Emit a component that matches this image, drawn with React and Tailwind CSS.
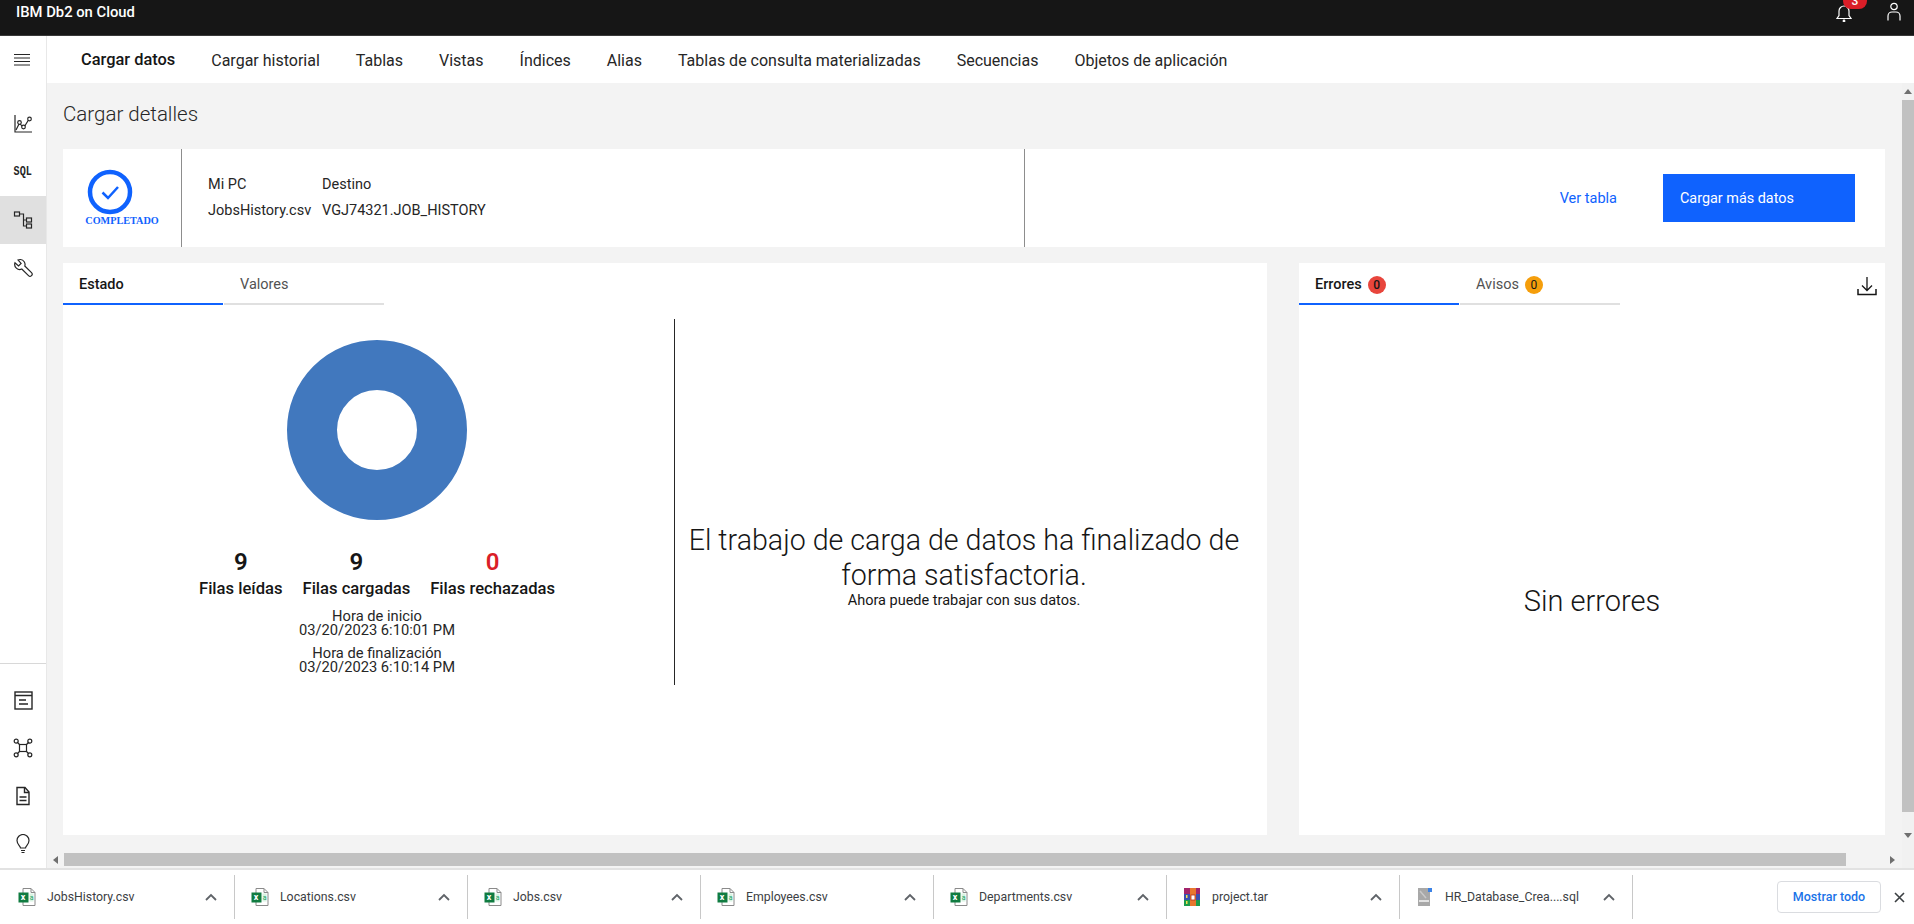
const navItems = ['Cargar datos', 'Cargar historial', 'Tablas', 'Vistas', 'Índices', 'Alias', 'Tablas de consulta materializadas', 'Secuencias', 'Objetos de aplicación'];

const downloads = [
  { name: 'JobsHistory.csv', type: 'xls' },
  { name: 'Locations.csv', type: 'xls' },
  { name: 'Jobs.csv', type: 'xls' },
  { name: 'Employees.csv', type: 'xls' },
  { name: 'Departments.csv', type: 'xls' },
  { name: 'project.tar', type: 'rar' },
  { name: 'HR_Database_Crea....sql', type: 'sql' },
];

const stats = [
  { value: '9', label: 'Filas leídas', red: false },
  { value: '9', label: 'Filas cargadas', red: false },
  { value: '0', label: 'Filas rechazadas', red: true },
];

function Icon({ children, size = 20, vb = 20 }) {
  return (
    <svg width={size} height={size} viewBox={`0 0 ${vb} ${vb}`} fill="none" stroke="#262626" strokeWidth="1.2">
      {children}
    </svg>
  );
}

function ExcelIcon() {
  return (
    <svg width="18" height="18" viewBox="0 0 18 18" fill="none">
      <path d="M5 .5h8l4 4v13H5z" fill="#fff" stroke="#8a8a8a" />
      <path d="M13 .5v4h4" stroke="#8a8a8a" />
      <rect x="11.5" y="5.5" width="4" height="8" fill="#d8f3e2" />
      <text x="11.8" y="12" fontSize="7" fill="#21a366" fontFamily="Roboto, sans-serif">a</text>
      <rect x="0.5" y="4.5" width="10" height="10" fill="#107c41" />
      <text x="2.8" y="12.4" fontSize="9" fontWeight="700" fill="#fff" fontFamily="Roboto, sans-serif">x</text>
    </svg>
  );
}

function RarIcon() {
  return (
    <svg width="18" height="18" viewBox="0 0 18 18">
      <rect x="1" y="0" width="16" height="6" fill="#a3246b" />
      <rect x="1" y="6" width="16" height="6" fill="#3a4fb0" />
      <rect x="1" y="12" width="16" height="6" fill="#1c9c4b" />
      <rect x="7" y="0" width="6" height="18" fill="#e8772e" />
      <rect x="8" y="7" width="4" height="5" fill="#fff" stroke="#b03020" strokeWidth="0.8" />
      <rect x="3" y="7" width="1.5" height="3" fill="#f5e050" />
      <rect x="3" y="13" width="1.5" height="3" fill="#f5e050" />
    </svg>
  );
}

function SqlIcon() {
  return (
    <svg width="18" height="18" viewBox="0 0 18 18">
      <path d="M2 0h10l2 2v16H2z" fill="#a8a8a8" />
      <path d="M4 3l6 7" stroke="#c9c9c9" strokeWidth="1.5" />
      <rect x="3" y="12" width="10" height="2" fill="#e2e2e2" />
      <rect x="12" y="0" width="4" height="4" fill="#3b82e6" />
    </svg>
  );
}

function Triangle({ dir }) {
  const pts = { up: '4,1 8,6 0,6', down: '0,1 8,1 4,6', left: '6,0 6,8 1,4', right: '2,0 2,8 7,4' };
  return (
    <svg width="8" height="8" viewBox="0 0 8 8">
      <polygon points={pts[dir]} fill="#6f6f6f" />
    </svg>
  );
}

function Sidebar() {
  return (
    <aside className="w-[47px] shrink-0 bg-white border-r border-[#e8e8e8] flex flex-col">
      <div className="h-[47px] shrink-0 flex items-center justify-center pr-[3px]">
        <svg width="18" height="14" viewBox="0 0 18 14" stroke="#262626" strokeWidth="1">
          <path d="M1 1.5h16M1 5h16M1 8.5h16M1 12h16" />
        </svg>
      </div>
      <div className="h-[17px] shrink-0" />
      <div className="h-[48px] flex items-center justify-center">
        <Icon>
          <path d="M2 1v17h17" />
          <path d="M3 16l3.500-7 4 5 5-8" />
          <circle cx="6.500" cy="8.500" r="1.800" fill="#fff" />
          <circle cx="10.500" cy="13" r="1.800" fill="#fff" />
          <circle cx="16.500" cy="5" r="1.800" fill="#fff" />
        </Icon>
      </div>
      <div className="h-[48px] flex items-center justify-center">
        <span className="text-[13px] font-bold text-[#262626] font-['Liberation_Mono',monospace] scale-x-[0.78]">SQL</span>
      </div>
      <div className="h-[48px] bg-[#e0e0e0] flex items-center justify-center">
        <Icon>
          <rect x="1.500" y="2" width="5" height="4" />
          <path d="M6.500 4h4v12.500M10.500 10h3M10.500 16h3" />
          <rect x="13.500" y="8" width="5" height="4" />
          <rect x="13.500" y="14" width="5" height="4" />
        </Icon>
      </div>
      <div className="h-[48px] flex items-center justify-center">
        <Icon>
          <path d="M7.500 1.500a5 5 0 0 1 4.300 6.500l6.700 6.700a2.100 2.100 0 0 1-3 3L8.800 11a5 5 0 0 1-6.800-6.200l3.500 3.200 2.600-2.600L5 2a5 5 0 0 1 2.500-.5z" />
        </Icon>
      </div>
      <div className="flex-1" />
      <div className="border-t border-[#d8d8d8] mb-[12px]" />
      <div className="h-[48px] flex items-center justify-center">
        <Icon>
          <rect x="2" y="2" width="17" height="17" strokeWidth="1.400" />
          <path d="M2 5.500h17M6 10h7M6 14h9" strokeWidth="1.400" />
        </Icon>
      </div>
      <div className="h-[48px] flex items-center justify-center">
        <Icon>
          <rect x="6.500" y="6.500" width="7" height="7" />
          <path d="M6.500 6.500L4 4M13.500 6.500L16 4M6.500 13.500L4 16M13.500 13.500L16 16" />
          <circle cx="3.200" cy="3.200" r="2" />
          <circle cx="16.800" cy="3.200" r="2" />
          <circle cx="3.200" cy="16.800" r="2" />
          <circle cx="16.800" cy="16.800" r="2" />
        </Icon>
      </div>
      <div className="h-[48px] flex items-center justify-center">
        <Icon>
          <path d="M4 1.500h8l4 4.500v12.500H4z" strokeWidth="1.400" />
          <path d="M11.500 1.500v5H16M6.500 11h7M6.500 14.500h7" strokeWidth="1.400" />
        </Icon>
      </div>
      <div className="h-[48px] flex items-center justify-center">
        <Icon>
          <path d="M7.500 14c0-2-3.500-3.500-3.500-7.500a6 6 0 0 1 12 0C16 10.500 12.500 12 12.500 14z" />
          <path d="M8 16.500h4M8.500 18.500h3" />
        </Icon>
      </div>
    </aside>
  );
}

function Tabs({ first, second }) {
  return (
    <div className="flex h-[43px]">
      <div className="w-[160px] border-b-2 border-[#0f62fe] pl-[16px] pt-[13px] text-[14.5px] leading-[18px] font-medium text-[#161616] flex items-start gap-[6px] h-[42px]">{first}</div>
      <div className="w-[160px] ml-[1px] border-b-2 border-[#e0e0e0] pl-[16px] pt-[13px] text-[14.5px] leading-[18px] text-[#525252] flex items-start gap-[6px] h-[42px]">{second}</div>
    </div>
  );
}

function Badge({ color, children }) {
  return (
    <span className={`w-[18px] h-[18px] rounded-full flex items-center justify-center text-[12px] leading-none text-[#161616] ${color}`}>
      {children}
    </span>
  );
}

function LeftPanel() {
  return (
    <section className="w-[1204px] h-[572px] bg-white">
      <Tabs first="Estado" second="Valores" />
      <div className="flex">
        <div className="w-[611px] pl-[17px] pt-[34px] flex flex-col items-center">
          <svg width="180" height="180" viewBox="0 0 180 180">
            <circle cx="90" cy="90" r="65" fill="none" stroke="#4178be" strokeWidth="50" />
          </svg>
          <div className="flex gap-[20px] mt-[27px]">
            {stats.map((s) => (
              <div key={s.label} className="flex flex-col items-center">
                <span className={`text-[24px] leading-[30px] font-semibold ${s.red ? 'text-[#da1e28]' : 'text-[#161616]'}`}>{s.value}</span>
                <span className="text-[16.6px] leading-[24px] font-medium text-[#161616]">{s.label}</span>
              </div>
            ))}
          </div>
          <div className="mt-[9px] text-center text-[14.7px] leading-[13.5px] text-[#262626]">
            <p>Hora de inicio</p>
            <p>03/20/2023 6:10:01 PM</p>
            <p className="mt-[10px]">Hora de finalización</p>
            <p>03/20/2023 6:10:14 PM</p>
          </div>
        </div>
        <div className="w-px h-[366px] mt-[13px] bg-[#262626]" />
        <div className="w-[578px] pt-[217px] text-center text-[#161616]">
          <p className="text-[28.6px] leading-[35px] font-light">El trabajo de carga de datos ha finalizado de<br />forma satisfactoria.</p>
          <p className="text-[14.5px] leading-[16px]">Ahora puede trabajar con sus datos.</p>
        </div>
      </div>
    </section>
  );
}

function RightPanel() {
  return (
    <section className="w-[586px] h-[572px] bg-white relative">
      <Tabs
        first={<><span>Errores</span><Badge color="bg-[#e8453c]">0</Badge></>}
        second={<><span>Avisos</span><Badge color="bg-[#f59e0b]">0</Badge></>}
      />
      <div className="absolute right-[8px] top-[13px]">
        <svg width="20" height="20" viewBox="0 0 20 20" fill="none" stroke="#161616" strokeWidth="1.300">
          <path d="M10 1v13M5 9.500l5 5 5-5" />
          <path d="M1 13v5.500h18V13" strokeWidth="1.500" />
        </svg>
      </div>
      <div className="pt-[278px] text-center text-[29px] leading-[35px] font-light text-[#161616]">Sin errores</div>
    </section>
  );
}

function DownloadBar() {
  return (
    <footer className="h-[56px] shrink-0 bg-white border-t-2 border-[#e2e2e2] flex items-center pl-[2px]">
      {downloads.map((d) => (
        <div key={d.name} className="w-[233px] h-[44px] shrink-0 border-r border-[#c8c8c8] flex items-center pl-[16px] pr-[17px]">
          <span className="w-[29px] shrink-0">
            {d.type === 'xls' && <ExcelIcon />}
            {d.type === 'rar' && <RarIcon />}
            {d.type === 'sql' && <SqlIcon />}
          </span>
          <span className="flex-1 text-[12.3px] text-[#3c4043]">{d.name}</span>
          <svg width="12" height="8" viewBox="0 0 12 8" fill="none" stroke="#5f6368" strokeWidth="1.800">
            <path d="M1 7l5-5 5 5" />
          </svg>
        </div>
      ))}
      <div className="flex-1" />
      <div className="w-[104px] h-[32px] border border-[#dadce0] rounded-[4px] flex items-center justify-center text-[12.5px] font-medium text-[#1a73e8]">Mostrar todo</div>
      <div className="w-[33px] pl-[4px] flex items-center justify-center">
        <svg width="11" height="11" viewBox="0 0 11 11" stroke="#3c4043" strokeWidth="1.600">
          <path d="M1 1l9 9M10 1l-9 9" />
        </svg>
      </div>
    </footer>
  );
}

export default function App() {
  return (
    <div className="w-[1914px] h-[924px] overflow-hidden flex flex-col bg-white font-['Roboto',sans-serif]">
      <header className="h-[36px] shrink-0 bg-[#161616] border-b border-[#393939] relative flex items-start">
        <span className="ml-[16px] mt-[3px] text-[14.8px] leading-[18px] font-medium text-white">IBM Db2 on Cloud</span>
        <svg className="absolute left-[1835px] top-[3px]" width="18" height="19" viewBox="0 0 18 19" fill="none" stroke="#fff" strokeWidth="1.200">
          <path d="M2 15.500h14l-2-3V8a5 5 0 0 0-10 0v4.500z" />
          <circle cx="9" cy="18" r="0.800" fill="#fff" />
        </svg>
        <span className="absolute left-[1843px] top-[-7px] w-[24px] h-[16px] rounded-[8px] bg-[#da1e28] text-white text-[12px] leading-[16px] text-center font-medium">3</span>
        <svg className="absolute left-[1886px] top-[2px]" width="16" height="19" viewBox="0 0 16 19" fill="none" stroke="#fff" strokeWidth="1.200">
          <circle cx="8" cy="4.500" r="3.200" />
          <path d="M2 18.500V14a4 4 0 0 1 4-4h4a4 4 0 0 1 4 4v4.500" />
        </svg>
      </header>
      <div className="flex-1 min-h-0 flex">
        <Sidebar />
        <main className="flex-1 min-w-0 flex flex-col">
          <nav className="h-[47px] shrink-0 bg-white flex items-center pl-[16px] pt-[2px]">
            {navItems.map((item, i) => (
              <span key={item} className={`px-[18px] ${i === 0 ? 'text-[16.4px] font-medium text-[#161616]' : 'text-[16px] text-[#262626]'}`}>{item}</span>
            ))}
          </nav>
          <div className="flex-1 min-h-0 flex bg-[#f3f3f3]">
            <div className="flex-1 min-w-0 flex flex-col">
              <div className="flex-1 min-h-0 pl-[16px] pr-[17px]">
                <h1 className="h-[66px] pt-[18px] text-[20.5px] leading-[26px] font-light text-[#262626]">Cargar detalles</h1>
                <div className="h-[98px] bg-white flex">
                  <div className="w-[119px] border-r border-[#8d8d8d] flex flex-col items-center pt-[20px] relative">
                    <svg width="46" height="46" viewBox="0 0 46 46" fill="none" className="mr-[24px]">
                      <circle cx="23" cy="23" r="20" stroke="#0f62fe" strokeWidth="4.500" />
                      <path d="M15.500 23.500l5.500 5.500 10-11" stroke="#0f62fe" strokeWidth="2.500" />
                    </svg>
                    <span className="text-[10.2px] leading-[12px] font-bold text-[#0f62fe] font-['Liberation_Serif',serif]">COMPLETADO</span>
                  </div>
                  <div className="w-[843px] border-r border-[#8d8d8d] pl-[26px] pt-[23px] text-[14.5px] leading-[26px] text-[#262626] grid grid-cols-[114px_1fr] content-start">
                    <span>Mi PC</span>
                    <span>Destino</span>
                    <span>JobsHistory.csv</span>
                    <span>VGJ74321.JOB_HISTORY</span>
                  </div>
                  <div className="flex-1 flex items-center justify-end pr-[30px]">
                    <span className="text-[14.5px] text-[#0f62fe] mr-[46px] pt-[1px]">Ver tabla</span>
                    <div className="w-[192px] h-[48px] bg-[#0f62fe] text-white text-[14.4px] flex items-center pl-[17px] pt-[1px]">Cargar más datos</div>
                  </div>
                </div>
                <div className="flex gap-[32px] mt-[16px]">
                  <LeftPanel />
                  <RightPanel />
                </div>
              </div>
              <div className="h-[15px] shrink-0 flex items-start">
                <div className="w-[17px] h-[13px] flex items-center justify-center"><Triangle dir="left" /></div>
                <div className="w-[1782px] h-[13px] bg-[#c1c1c1]" />
                <div className="flex-1 h-[13px] flex items-center justify-end pr-[6px]"><Triangle dir="right" /></div>
              </div>
            </div>
            <div className="w-[12px] shrink-0 flex flex-col items-center bg-[#f1f1f1]">
              <div className="h-[17px] flex items-center justify-center"><Triangle dir="up" /></div>
              <div className="w-full h-[712px] bg-[#c1c1c1]" />
              <div className="flex-1" />
              <div className="h-[42px] flex items-start justify-center pt-[6px]"><Triangle dir="down" /></div>
            </div>
          </div>
        </main>
      </div>
      <DownloadBar />
    </div>
  );
}
